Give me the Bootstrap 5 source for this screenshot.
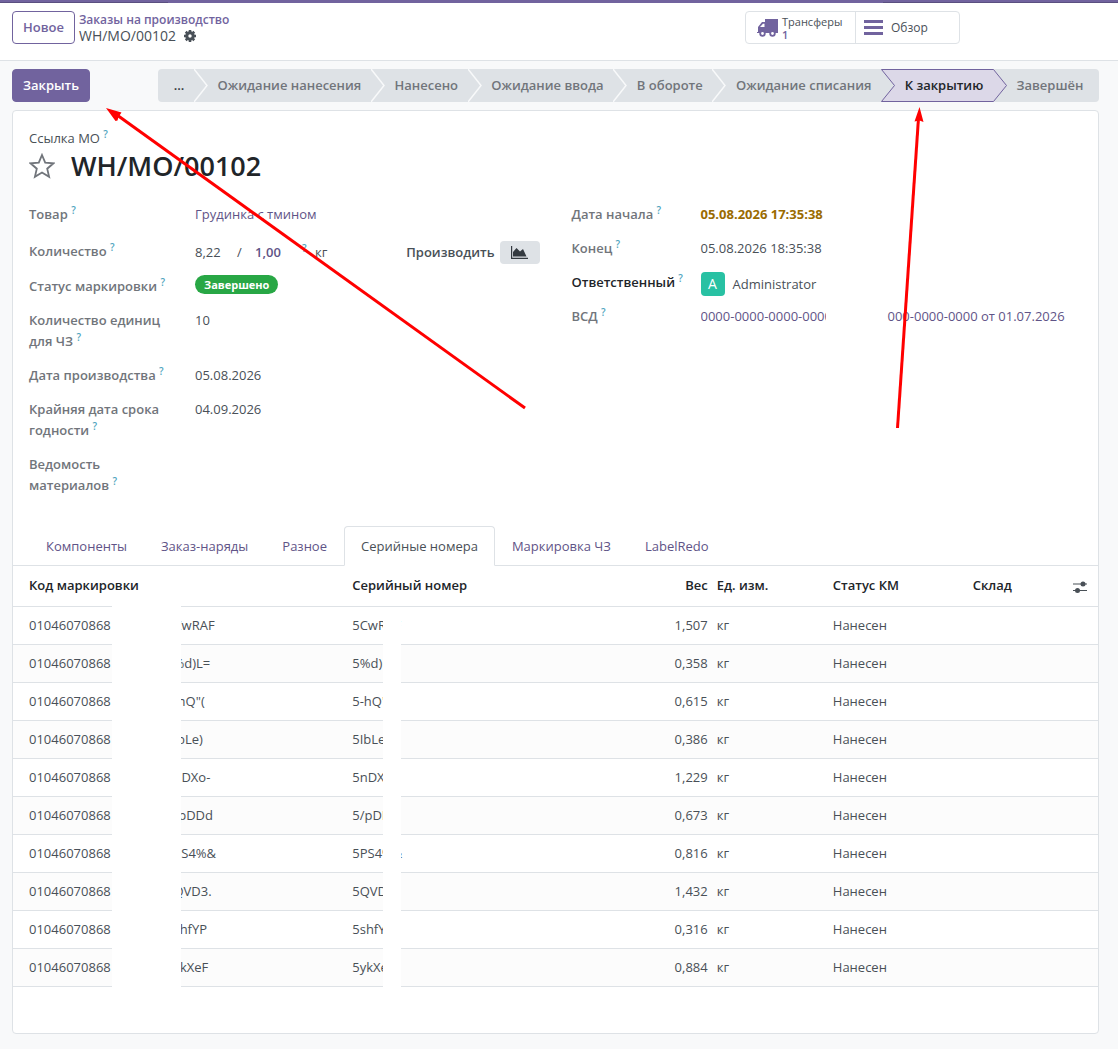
<!DOCTYPE html>
<html lang="ru">
<head>
<meta charset="utf-8">
<meta name="viewport" content="width=device-width, initial-scale=1">
<title>WH/MO/00102</title>
<link href="https://cdn.jsdelivr.net/npm/bootstrap@5.3.0/dist/css/bootstrap.min.css" rel="stylesheet">
<style>
:root{--brand:#71639e;--brand-dark:#5a4f80;--line:#dee2e6;--ink:#495057}
body{font-family:"Open Sans","Noto Sans",sans-serif;font-size:13px;line-height:21px;color:var(--ink);background:#f8f9fa}
a{color:#5f5487;text-decoration:none}
.topline{height:3px;background:linear-gradient(90deg,var(--brand-dark) 15%,var(--brand) 15%,var(--brand) 79%,var(--brand-dark) 79%) bottom/100% 1px no-repeat var(--brand)}
.cpanel{background:#fff;border-bottom:1px solid var(--line);padding:8px 12px 16px;gap:4px}
.btn{--bs-btn-font-size:13px;--bs-btn-line-height:21px;--bs-btn-padding-y:5px;--bs-btn-padding-x:10px;--bs-btn-border-radius:4px;font-weight:600}
.btn-new{--bs-btn-color:var(--brand);--bs-btn-border-color:var(--brand);--bs-btn-bg:#fff}
.btn-close-mo{--bs-btn-color:#fff;--bs-btn-bg:var(--brand);--bs-btn-border-color:var(--brand)}
.crumbs{line-height:17px}
.crumbs a{color:var(--brand);font-weight:600;font-size:12px}
.crumb-now{font-size:14px;line-height:16px}
.statbox{width:215px;margin-left:auto;margin-right:146px;border:1px solid var(--line);border-radius:4px;height:33px}
.statbtn{border:0;background:none;color:var(--ink);font-size:12px;line-height:13px;padding:0 8px;text-align:left;flex:1 1 auto}
.statbtn-move{flex:none;width:110px;padding:0 0 0 11px;font-size:11px;border-right:1px solid var(--line)}
.statbtn b{color:var(--brand);font-weight:600}
.content-area{padding:8px 19px 14px 12px}
.steps{margin-left:68px;height:33px;border-radius:4px;overflow:hidden;background:var(--line)}
.step{border:0;background:none;color:#71757b;font-weight:600;flex:1 1 auto;padding:0 2px;white-space:nowrap}
.step-first{color:#343a40;padding-left:8px}
.step-last{padding-right:8px}
.step-on{background:#dcd8e8;color:#212529;border-top:1px solid var(--brand);border-bottom:1px solid var(--brand)}
.sheet{background:#fff;border:1px solid var(--line);border-radius:4px;margin-top:8px;padding-bottom:46px}
.sheet-head{padding:17px 16px 0}
.moname{font-size:27px;line-height:34px;font-weight:600;color:#212529;margin:0}
.q{color:#0180a5;opacity:.7;font-size:10px;font-weight:600;top:-5px;position:relative;line-height:0;vertical-align:baseline}
.fields{padding:21px 16px 0}
.frow{display:flex;min-height:34px;padding-bottom:13px}
.frow-tall{min-height:37px}
.flabel{flex:none;width:166px;padding-right:24px;font-weight:600;color:#71757b}
.fcol-right .flabel{width:129px;padding-right:0;white-space:nowrap}
.frow-user{height:34px}
.fcol-left{width:50%}
.fcol-right{width:50%}
.qty-done{width:42px}.qty-sep{width:18px}.qty-plan{width:43px;color:#5f5487;font-weight:600}.qty-help{width:17px}
.pill{background:#28a745;color:#fff;border-radius:10px;font-size:11px;font-weight:700;line-height:19px;height:19px;padding:0 9px;margin-top:-1px}
.btn-graph{border:0;border-radius:4px;background:var(--line);width:40px;height:23px;line-height:0;margin:0 0 -1px 5px;padding:0}
.avatar{width:24px;height:24px;border-radius:4px;background:#28c1a3;color:#fff;text-align:center;line-height:24px;font-size:14px;margin-right:8px}
.uname{line-height:24px}
.late{color:#9a6b01}
.vsd-head{width:125px;overflow:hidden;white-space:nowrap;margin-right:62px}
.nav-tabs{--bs-nav-tabs-border-color:var(--line);--bs-nav-tabs-border-radius:4px;--bs-nav-link-color:#5f5487;--bs-nav-link-padding-x:16px;--bs-nav-tabs-link-active-color:var(--ink);padding-left:16px;margin-top:17px}
.nav-tabs .nav-link{padding-top:9px;padding-bottom:8px}
.lines{table-layout:fixed;margin:0;--bs-table-bg:#fff;color:var(--ink);border-color:var(--line)}
.lines th{color:#212529;font-weight:600;padding:9px 4px 10px;white-space:nowrap}
.lines td{padding:8px 4px;white-space:nowrap}
.lines th:first-child,.lines td:first-child{padding-left:16px}
.lines th:nth-child(n+4),.lines td:nth-child(n+4){padding-left:5px}
.code{display:inline-block;width:137px}
.veil{position:absolute;background:#fff;bottom:-2px}
.veil-code{left:99px;width:69px;top:38px}
.veil-serial{left:370px;width:18px;top:41px}
.marks{position:absolute;left:0;top:0;pointer-events:none}
svg{flex:none}
</style>
<script src="https://cdn.jsdelivr.net/npm/bootstrap@5.3.0/dist/js/bootstrap.bundle.min.js"></script>
</head>
<body class="position-relative">
<div class="topline"></div>
<header class="cpanel d-flex align-items-start">
  <button type="button" class="btn btn-new">Новое</button>
  <div class="crumbs">
    <div><a href="#">Заказы на производство</a></div>
    <div class="d-flex align-items-center gap-2"><span class="crumb-now">WH/MO/00102</span>
      <svg width="12" height="12" viewBox="0 0 16 16" fill="none" stroke="#495057"><circle cx="8" cy="8" r="4.3" stroke-width="4"/><path stroke-width="3.4" d="M8 0v3M8 13v3M0 8h3M13 8h3M2.3 2.3l2 2M11.7 11.7l2 2M2.3 13.7l2-2M11.7 4.3l2-2"/></svg></div>
  </div>
  <div class="statbox d-flex">
    <button type="button" class="statbtn statbtn-move d-flex align-items-center"><svg width="21" height="18" viewBox="0 0 21 18"><path fill="#71639e" d="M8 0h13v14H0v-1h1V8l4-5h3z"/><path fill="#fff" d="M3 8l3-3.200h1.500V8z"/><g fill="#fff" stroke="#71639e" stroke-width="1.800"><circle cx="5.500" cy="14.500" r="2.300"/><circle cx="15.500" cy="14.500" r="2.300"/></g></svg><span class="ms-1">Трансферы<br><b>1</b></span></button>
    <button type="button" class="statbtn d-flex align-items-center"><svg width="19" height="16" viewBox="0 0 19 16"><path fill="#71639e" d="M0 0h19v3H0zM0 6h19v3H0zM0 12h19v3H0z"/></svg><span class="ms-2">Обзор</span></button>
  </div>
</header>

<main class="content-area">
  <div class="d-flex">
    <button type="button" class="btn btn-close-mo">Закрыть</button>
    <div class="steps d-flex flex-grow-1">
      <button type="button" class="step step-first">...</button>
      <svg width="14" height="33" fill="none" stroke="#f8f9fa" stroke-width="1.500"><path d="M0 0l13 16.500L0 33"/></svg>
      <button type="button" class="step">Ожидание нанесения</button>
      <svg width="14" height="33" fill="none" stroke="#f8f9fa" stroke-width="1.500"><path d="M0 0l13 16.500L0 33"/></svg>
      <button type="button" class="step">Нанесено</button>
      <svg width="14" height="33" fill="none" stroke="#f8f9fa" stroke-width="1.500"><path d="M0 0l13 16.500L0 33"/></svg>
      <button type="button" class="step">Ожидание ввода</button>
      <svg width="14" height="33" fill="none" stroke="#f8f9fa" stroke-width="1.500"><path d="M0 0l13 16.500L0 33"/></svg>
      <button type="button" class="step">В обороте</button>
      <svg width="14" height="33" fill="none" stroke="#f8f9fa" stroke-width="1.500"><path d="M0 0l13 16.500L0 33"/></svg>
      <button type="button" class="step">Ожидание списания</button>
      <svg width="14" height="33"><path fill="#dcd8e8" d="M0 0h14v33H0l13-16.500z"/><path fill="none" stroke="#71639e" d="M14 .5H.5l13 16-13 16H14"/></svg>
      <button type="button" class="step step-on">К закрытию</button>
      <svg width="14" height="33"><path fill="#dcd8e8" stroke="#71639e" d="M-2 .5H.5l13 16-13 16H-2"/></svg>
      <button type="button" class="step step-last">Завершён</button>
    </div>
  </div>

  <section class="sheet">
    <div class="sheet-head">
      <div>Ссылка МО <sup class="q">?</sup></div>
      <div class="d-flex align-items-center">
        <svg width="26" height="26" viewBox="0 0 26 26" fill="none" stroke="#71757b" stroke-width="1.800"><path d="M13 2l3.200 7.600 8.300.7-6.300 5.400 1.900 8.100L13 19.500l-7.100 4.300 1.900-8.100L1.500 10.300l8.300-.7z"/></svg>
        <h1 class="moname ms-3">WH/MO/00102</h1>
      </div>
    </div>
    <div class="fields d-flex">
      <div class="fcol-left">
        <div class="frow frow-tall"><div class="flabel">Товар <sup class="q">?</sup></div><a href="#">Грудинка с тмином</a></div>
        <div class="frow"><div class="flabel">Количество <sup class="q">?</sup></div>
          <div class="d-flex align-items-center"><span class="qty-done">8,22</span><span class="qty-sep">/</span><span class="qty-plan">1,00</span><span class="qty-help ps-1"><sup class="q">?</sup></span><span>кг</span></div>
          <div class="d-flex align-items-center ms-auto pe-3"><span class="fw-semibold">Производить</span>
          <button type="button" class="btn-graph" aria-label="Прогноз"><svg width="17" height="13" viewBox="0 0 17 13"><path fill="none" stroke="#343a40" stroke-width="1.200" d="M.6 0v12.400H17"/><path fill="#343a40" d="M2 10.500V6l3.500-4L9 5.500 12 3l3.500 7.500z"/></svg></button></div>
        </div>
        <div class="frow"><div class="flabel text-nowrap">Статус маркировки <sup class="q">?</sup></div><span class="pill">Завершено</span></div>
        <div class="frow"><div class="flabel">Количество единиц для ЧЗ <sup class="q">?</sup></div><span>10</span></div>
        <div class="frow"><div class="flabel text-nowrap">Дата производства <sup class="q">?</sup></div><span>05.08.2026</span></div>
        <div class="frow"><div class="flabel">Крайняя дата срока годности <sup class="q">?</sup></div><span>04.09.2026</span></div>
        <div class="frow"><div class="flabel">Ведомость материалов <sup class="q">?</sup></div></div>
      </div>
      <div class="fcol-right ps-3">
        <div class="frow"><div class="flabel">Дата начала <sup class="q">?</sup></div><span class="fw-bold late">05.08.2026 17:35:38</span></div>
        <div class="frow"><div class="flabel">Конец <sup class="q">?</sup></div><span>05.08.2026 18:35:38</span></div>
        <div class="frow frow-user"><div class="flabel text-dark">Ответственный <sup class="q">?</sup></div><span class="avatar">A</span><span class="uname">Administrator</span></div>
        <div class="frow"><div class="flabel">ВСД <sup class="q">?</sup></div><a href="#" class="d-flex text-nowrap"><span class="vsd-head">0000-0000-0000-0000</span><span>000-0000-0000 от 01.07.2026</span></a></div>
      </div>
    </div>

    <ul class="nav nav-tabs">
      <li class="nav-item"><a class="nav-link" href="#">Компоненты</a></li>
      <li class="nav-item"><a class="nav-link" href="#">Заказ-наряды</a></li>
      <li class="nav-item"><a class="nav-link" href="#">Разное</a></li>
      <li class="nav-item"><a class="nav-link active" href="#">Серийные номера</a></li>
      <li class="nav-item"><a class="nav-link" href="#">Маркировка ЧЗ</a></li>
      <li class="nav-item"><a class="nav-link" href="#">LabelRedo</a></li>
    </ul>
    <div class="position-relative">
      <table class="table lines">
        <colgroup><col style="width:30.9%"><col style="width:28.1%"><col style="width:5.4%"><col style="width:10.7%"><col style="width:12.9%"><col><col style="width:38px"></colgroup>
        <thead><tr><th>Код маркировки</th><th>Серийный номер</th><th class="text-end">Вес</th><th>Ед. изм.</th><th>Статус КМ</th><th>Склад</th>
          <th><svg class="ms-2" width="14" height="12" viewBox="0 0 14 12"><path stroke="#495057" stroke-width="1.200" d="M0 3h14M0 9.500h14"/><circle cx="10" cy="3" r="2.500" fill="#495057"/><circle cx="4.500" cy="9.500" r="2.500" fill="#495057"/></svg></th></tr></thead>
        <tbody id="rows"></tbody>
      </table>
      <div class="veil veil-code"></div>
      <div class="veil veil-serial"></div>
    </div>
  </section>
</main>
<svg class="marks" width="1118" height="440" fill="red" stroke="red"><path d="M117 115L525 408" stroke-width="3"/><path stroke="none" d="M106 108l15.500 4.500-3 4.500-1 3.500-2 .5z"/><path d="M918.500 118L897.500 428" stroke-width="3"/><path stroke="none" d="M919.500 107l4 15-4-1.500-5 1z"/></svg>
<script>
const rows=[["5CwRAF","1,507"],["5%d)L=","0,358"],["5-hQ\"(","0,615"],["5IbLe)","0,386"],["5nDXo-","1,229"],["5/pDDd","0,673"],["5PS4%&","0,816"],["5QVD3.","1,432"],["5shfYP","0,316"],["5ykXeF","0,884"]];
const body=document.getElementById("rows");
rows.forEach(([serial,weight],i)=>{
  const tr=body.insertRow();
  if(i%2)tr.style.setProperty("--bs-table-bg","#fcfcfc");
  const c=tr.insertCell(),p=document.createElement("span");
  p.className="code";p.textContent="01046070868";c.append(p,serial);
  [serial,weight,"кг","Нанесен","",""].forEach((t,n)=>{const d=tr.insertCell();d.textContent=t;if(n===1)d.className="text-end";});
});
</script>
</body>
</html>
